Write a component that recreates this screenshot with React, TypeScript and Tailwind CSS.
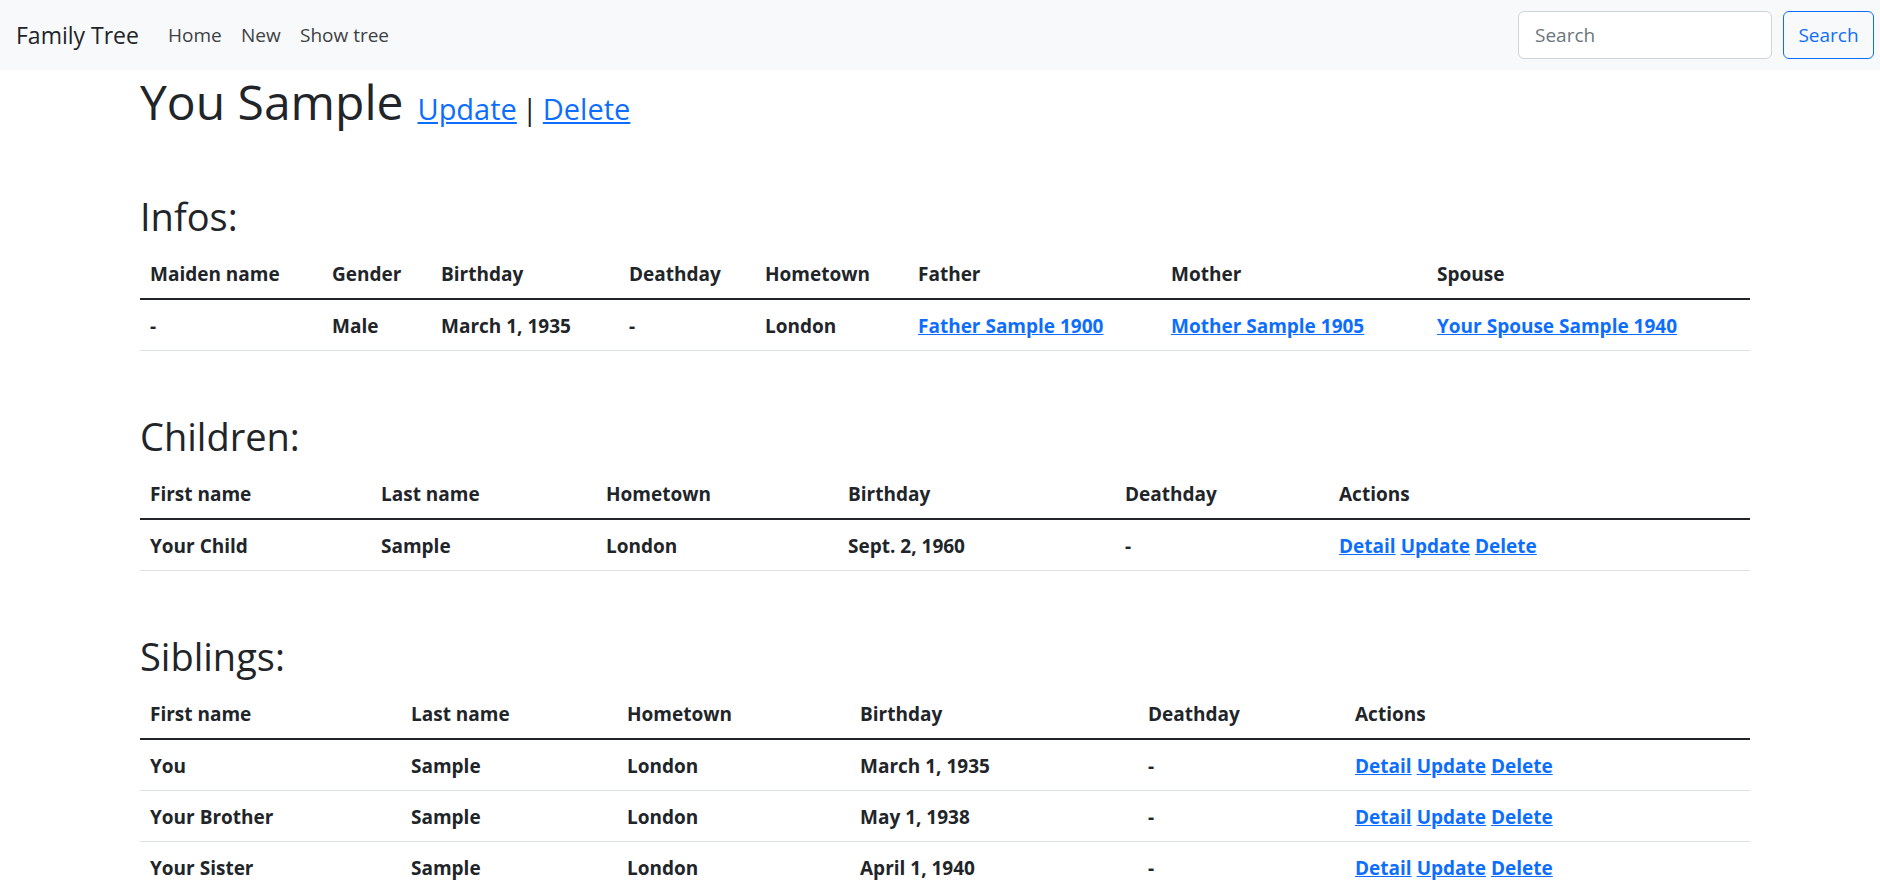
import React from 'react';

const font = { fontFamily: '"Open Sans", "Noto Sans", sans-serif' };

const actions = ['Detail', 'Update', 'Delete'];

function Actions() {
  return (
    <span className="inline-flex gap-[5px]">
      {actions.map((a) => (
        <a key={a} href="#" className="text-[#0d6efd] underline">
          {a}
        </a>
      ))}
    </span>
  );
}

function InfoTable({
  cols,
  headers,
  children,
}: {
  cols: number[];
  headers: string[];
  children: React.ReactNode;
}) {
  return (
    <table className="w-full table-fixed border-collapse text-[19px] leading-[30px] font-bold text-[#212529]">
      <colgroup>
        {cols.map((w, i) => (
          <col key={i} style={{ width: w }} />
        ))}
      </colgroup>
      <thead>
        <tr>
          {headers.map((h) => (
            <th key={h} className="text-left px-[10px] pt-[10px] pb-[9px] border-b-2 border-[#212529] font-bold">
              {h}
            </th>
          ))}
        </tr>
      </thead>
      <tbody>{children}</tbody>
    </table>
  );
}

function Td({ children }: { children: React.ReactNode }) {
  return <td className="px-[10px] pt-[11px] pb-[9px] border-b border-[#dee2e6]">{children}</td>;
}

function Link({ children }: { children: React.ReactNode }) {
  return (
    <a href="#" className="text-[#0d6efd] underline">
      {children}
    </a>
  );
}

const kids = [['Your Child', 'Sample', 'London', 'Sept. 2, 1960', '-']];

const siblings = [
  ['You', 'Sample', 'London', 'March 1, 1935', '-'],
  ['Your Brother', 'Sample', 'London', 'May 1, 1938', '-'],
  ['Your Sister', 'Sample', 'London', 'April 1, 1940', '-'],
];

function Heading({ children }: { children: React.ReactNode }) {
  return <h3 className="text-[38px] leading-[44px] font-medium text-[#212529] mb-[11px]">{children}</h3>;
}

export default function App() {
  return (
    <div className="min-h-screen bg-white text-[#212529]" style={font}>
      {/* Navbar */}
      <nav className="h-[70px] bg-[#f8f9fa] flex items-center pl-[16px] pr-[6px]">
        <a href="#" className="w-[152px] text-[23px] text-[#212529]">
          Family Tree
        </a>
        <a href="#" className="w-[73px] text-[19px] text-[#3d4145]">Home</a>
        <a href="#" className="w-[59px] text-[19px] text-[#3d4145]">New</a>
        <a href="#" className="text-[19px] text-[#3d4145]">Show tree</a>
        <form className="ml-auto flex gap-[11px]" onSubmit={(e) => e.preventDefault()}>
          <input
            type="search"
            placeholder="Search"
            className="w-[254px] h-[48px] px-[16px] text-[19px] bg-white border border-[#ced4da] rounded-[6px] placeholder:text-[#6c757d] outline-none"
          />
          <button className="w-[91px] h-[48px] text-[19px] text-[#0d6efd] border border-[#0d6efd] rounded-[6px]">
            Search
          </button>
        </form>
      </nav>

      <main className="pl-[140px] pr-[130px]">
        <div className="mt-[2px] flex items-baseline leading-[60px]">
          <h1 className="text-[48px] font-medium">You Sample</h1>
          <span className="ml-[14px] text-[29px]">
            <Link>Update</Link>
            <span className="mx-[5px]">|</span>
            <Link>Delete</Link>
          </span>
        </div>

        <section className="mt-[55px]">
          <Heading>Infos:</Heading>
          <InfoTable
            cols={[182, 109, 188, 136, 153, 253, 266, 323]}
            headers={['Maiden name', 'Gender', 'Birthday', 'Deathday', 'Hometown', 'Father', 'Mother', 'Spouse']}
          >
            <tr>
              <Td>-</Td>
              <Td>Male</Td>
              <Td>March 1, 1935</Td>
              <Td>-</Td>
              <Td>London</Td>
              <Td><Link>Father Sample 1900</Link></Td>
              <Td><Link>Mother Sample 1905</Link></Td>
              <Td><Link>Your Spouse Sample 1940</Link></Td>
            </tr>
          </InfoTable>
        </section>

        <section className="mt-[63px]">
          <Heading>Children:</Heading>
          <InfoTable
            cols={[231, 225, 242, 277, 214, 421]}
            headers={['First name', 'Last name', 'Hometown', 'Birthday', 'Deathday', 'Actions']}
          >
            {kids.map((r) => (
              <tr key={r[0]}>
                {r.map((c, i) => (
                  <Td key={i}>{c}</Td>
                ))}
                <Td><Actions /></Td>
              </tr>
            ))}
          </InfoTable>
        </section>

        <section className="mt-[63px] pb-[20px]">
          <Heading>Siblings:</Heading>
          <InfoTable
            cols={[261, 216, 233, 288, 207, 405]}
            headers={['First name', 'Last name', 'Hometown', 'Birthday', 'Deathday', 'Actions']}
          >
            {siblings.map((r) => (
              <tr key={r[0]}>
                {r.map((c, i) => (
                  <Td key={i}>{c}</Td>
                ))}
                <Td><Actions /></Td>
              </tr>
            ))}
          </InfoTable>
        </section>
      </main>
    </div>
  );
}
